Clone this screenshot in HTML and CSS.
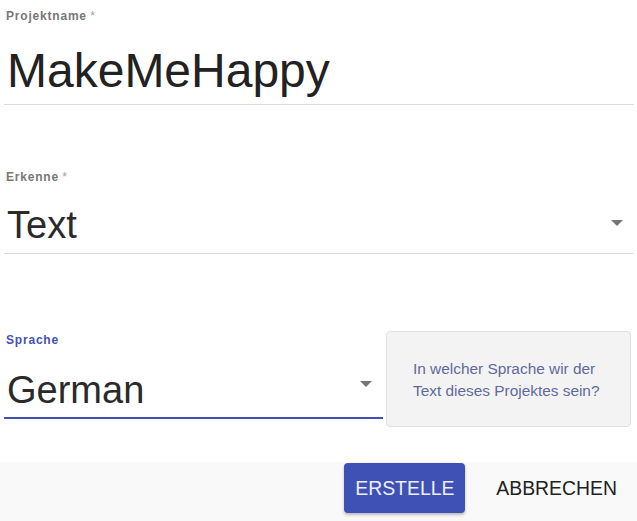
FILE: index.html
```html
<!DOCTYPE html>
<html>
<head>
<meta charset="utf-8">
<link rel="stylesheet" href="styles.css">
</head>
<body>
<div class="form">
  <div class="field f1">
    <div class="label">Projektname<span class="req"> *</span></div>
    <div class="value big">MakeMeHappy</div>
  </div>
  <div class="field f2">
    <div class="label">Erkenne<span class="req"> *</span></div>
    <div class="value sel">Text<span class="arrow"></span></div>
  </div>
  <div class="row">
    <div class="field f3">
      <div class="label blue">Sprache</div>
      <div class="value sel focus">German<span class="arrow"></span></div>
    </div>
    <div class="hint">In welcher Sprache wir der<br>Text dieses Projektes sein?</div>
  </div>
</div>
<div class="footer">
  <button class="btn primary">ERSTELLE</button>
  <button class="btn flat">ABBRECHEN</button>
</div>
</body>
</html>
```

FILE: styles.css
```css
html, body {
  margin: 0;
  padding: 0;
  background: #fff;
  font-family: "Liberation Sans", Arial, sans-serif;
}
.form {
  padding: 0 3px 0 4px;
  height: 462px;
  box-sizing: border-box;
}
.field .label {
  font-size: 12px;
  line-height: 14px;
  font-weight: bold;
  letter-spacing: 0.8px;
  color: #777;
  padding-left: 2px;
}
.label .req {
  font-weight: normal;
  letter-spacing: 0;
  color: #a0a0a0;
}
.label.blue {
  color: #3f51b5;
}
.f1 {
  padding-top: 9px;
}
.value {
  position: relative;
  color: #222;
  border-bottom: 1px solid #dcdcdc;
  padding-left: 3px;
}
.big {
  font-size: 48px;
  line-height: 56px;
  padding-top: 20px;
  padding-bottom: 5px;
}
.f2 {
  padding-top: 65px;
}
.sel {
  font-size: 38px;
  line-height: 46px;
  padding-top: 18px;
  padding-bottom: 5px;
  color: #2a2a2a;
}
.arrow {
  position: absolute;
  right: 11px;
  top: 36px;
  width: 0;
  height: 0;
  border-left: 6px solid transparent;
  border-right: 6px solid transparent;
  border-top: 6px solid #757575;
}
.row {
  display: flex;
  align-items: flex-start;
  padding-top: 79px;
}
.f3 {
  width: 379px;
}
.focus {
  border-bottom: 2px solid #3f51b5;
  padding-top: 20px;
  padding-bottom: 4px;
}
.focus .arrow {
  top: 34px;
}
.hint {
  margin-top: -2px;
  margin-left: 3px;
  width: 245px;
  height: 96px;
  box-sizing: border-box;
  background: #f3f3f3;
  border: 1px solid #e0e0e0;
  border-radius: 4px;
  color: #5f6a9c;
  font-size: 15.4px;
  line-height: 22px;
  padding: 26px 0 0 26px;
}
.footer {
  background: #f9f9f9;
  height: 59px;
  display: flex;
  justify-content: flex-end;
  align-items: flex-start;
  padding: 1px 9px 0 0;
  box-sizing: border-box;
  gap: 20px;
}
.btn {
  font-family: "Liberation Sans", Arial, sans-serif;
  font-size: 19.4px;
  height: 50px;
  border: none;
  border-radius: 4px;
  background: transparent;
  padding: 0 11px;
  cursor: pointer;
}
.primary {
  background: #3f51b5;
  color: #eceefa;
  width: 121px;
  padding: 0;
  box-shadow: 0 2px 3px rgba(0,0,0,0.25);
}
.flat {
  color: #222;
}
```
